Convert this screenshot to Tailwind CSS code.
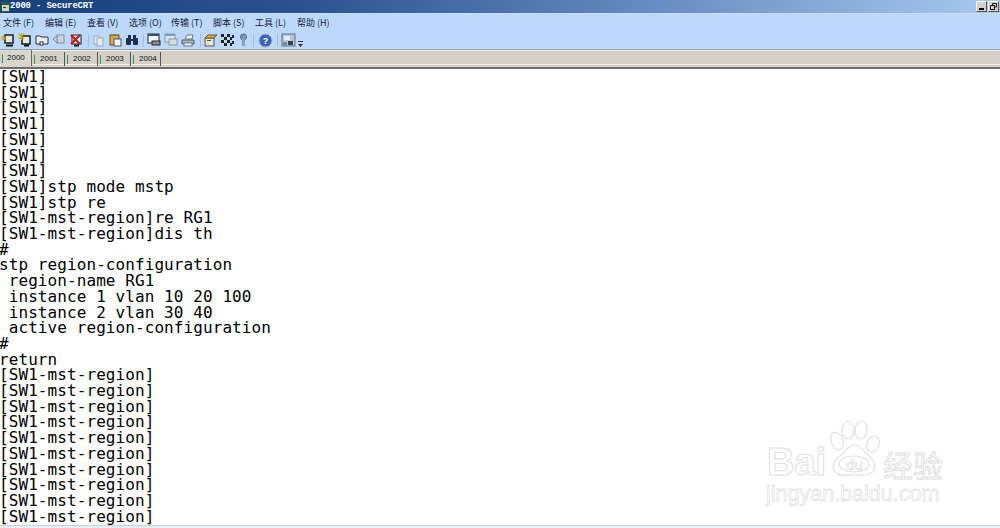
<!DOCTYPE html>
<html lang="zh">
<head>
    <meta charset="UTF-8">
    <title>2000 - SecureCRT</title>
    <script src="https://cdn.jsdelivr.net/npm/@tailwindcss/browser@4"></script>
</head>
<body class="w-[1000px] h-[528px] overflow-hidden bg-white relative flex flex-col">

    <!-- title bar -->
    <div class="h-[13px] shrink-0 flex items-center bg-gradient-to-r from-[#17407f] via-[#2a528f] via-30% to-[#a6caf0] pl-[1px] pr-[1px]">
        <svg width="9" height="10" viewBox="0 0 9 10"><rect x="0" y="0" width="9" height="10" fill="#2f5a3a"/><rect x="1" y="3" width="7" height="6" fill="#c9d6c8"/><rect x="2" y="5" width="3" height="1" fill="#333"/></svg>
        <span class="text-[9px] leading-[13px] font-bold text-white font-['Liberation_Mono',monospace] tracking-[-0.2px] whitespace-pre">2000 - SecureCRT</span>
        <div class="ml-auto flex gap-[1px]">
            <div class="w-[11px] h-[11px] bg-[#d4d0c8] border border-[#f4f3ef] border-r-[#555] border-b-[#555] flex items-end justify-center pb-[1px]"><div class="w-[5px] h-[2px] bg-black"></div></div>
            <div class="w-[11px] h-[11px] bg-[#d4d0c8] border border-[#f4f3ef] border-r-[#555] border-b-[#555] flex items-center justify-center">
                <svg width="7" height="7" viewBox="0 0 7 7" fill="none" stroke="#111"><path d="M2.500 2V.5h4v3.500H5M.5 2.500h4v4h-4z"/></svg>
            </div>
        </div>
    </div>

    <!-- menu and toolbar -->
    <div class="h-[37px] shrink-0 bg-[#bcd9fc] border-t border-[#cfdcef] border-b border-b-[#9aa3ad]">
        <div class="h-[18px] flex pl-[3px] items-center text-[9px] text-[#10203a] font-['Noto_Sans_CJK_SC','Liberation_Serif',serif] whitespace-nowrap">
            <span class="w-[42px]">文件 (F)</span>
            <span class="w-[42px]">编辑 (E)</span>
            <span class="w-[42px]">查看 (V)</span>
            <span class="w-[42px]">选项 (O)</span>
            <span class="w-[42px]">传输 (T)</span>
            <span class="w-[42px]">脚本 (S)</span>
            <span class="w-[42px]">工具 (L)</span>
            <span class="w-[42px]">帮助 (H)</span>
        </div>
        <div class="h-[16px] flex items-center pl-[1px]">
            <!-- connect group -->
            <svg class="w-[14px] h-[14px]" viewBox="0 0 14 14"><rect x="4" y="2" width="8" height="8" fill="#dfe8df" stroke="#111" stroke-width="1.400"/><path d="M0 5h5M2.500 2.500v5M.5 3l4 4M4.500 3l-4 4" stroke="#d0a820"/><path d="M5 12.500h7" stroke="#111" stroke-width="2"/></svg>
            <svg class="ml-[3px] w-[14px] h-[14px]" viewBox="0 0 14 14"><rect x="4" y="3" width="8" height="8" fill="#e4ecd8" stroke="#111" stroke-width="1.400"/><path d="M1 1l5 5M6 1L1 6M3.500 0v7" stroke="#c9a020" stroke-width="1.200"/><path d="M6 12.500h5" stroke="#111" stroke-width="2"/></svg>
            <svg class="ml-[3px] w-[14px] h-[14px]" viewBox="0 0 14 14" fill="#e8eef4" stroke="#333"><path d="M1 3h4l1 1h7v7H1z"/><rect x="5" y="9" width="3" height="3" fill="#fff"/></svg>
            <svg class="ml-[3px] w-[14px] h-[14px]" viewBox="0 0 14 14" fill="#c8d6e4" stroke="#7f8b98"><rect x="5" y="2" width="7" height="8"/><path d="M1 6l4-3v7z"/></svg>
            <svg class="ml-[3px] w-[14px] h-[14px]" viewBox="0 0 14 14"><rect x="3" y="2" width="9" height="9" fill="#e8edf2" stroke="#222"/><path d="M2 2l9 9M11 2l-9 9" stroke="#c01818" stroke-width="2.200"/><path d="M5 12.500h5" stroke="#111" stroke-width="2"/></svg>
            <div class="ml-[5px] w-[1px] h-[13px] bg-[#a8bcd4]"></div>
            <!-- edit group -->
            <svg class="ml-[3px] w-[13px] h-[13px]" viewBox="0 0 13 13" fill="#e4ecf4" stroke="#9aa8b8"><rect x="2" y="2" width="6" height="8"/><rect x="5" y="4" width="6" height="8"/></svg>
            <svg class="ml-[3px] w-[14px] h-[14px]" viewBox="0 0 14 14"><rect x="2" y="2" width="9" height="10" fill="#d8a848" stroke="#6a5020"/><rect x="5" y="1" width="3" height="2" fill="#777"/><rect x="6" y="6" width="7" height="7" fill="#f4f4f4" stroke="#555"/></svg>
            <svg class="ml-[3px] w-[14px] h-[14px]" viewBox="0 0 14 14" fill="#1e2f50"><rect x="1" y="5" width="5" height="7" rx="1"/><rect x="8" y="5" width="5" height="7" rx="1"/><rect x="3" y="2" width="3" height="4"/><rect x="8" y="2" width="3" height="4"/><rect x="6" y="6" width="2" height="2"/></svg>
            <div class="ml-[4px] w-[1px] h-[13px] bg-[#a8bcd4]"></div>
            <!-- session group -->
            <svg class="ml-[3px] w-[15px] h-[14px]" viewBox="0 0 15 14"><rect x="1" y="1" width="11" height="9" fill="#f2f4f6" stroke="#222"/><rect x="1" y="1" width="11" height="2" fill="#3a4f78"/><rect x="5" y="8" width="8" height="4" fill="#8c8c8c" stroke="#222"/></svg>
            <svg class="ml-[2px] w-[15px] h-[14px]" viewBox="0 0 15 14"><rect x="1" y="1" width="10" height="8" fill="#dce6ee" stroke="#8498a8"/><rect x="1" y="1" width="10" height="2" fill="#7f9ab8"/><rect x="5" y="6" width="8" height="6" fill="#cfe0d4" stroke="#8498a8"/></svg>
            <svg class="ml-[2px] w-[15px] h-[14px]" viewBox="0 0 15 14"><path d="M4 6l2-4h6l-1 4z" fill="#eef2f6" stroke="#6a7684"/><path d="M1 7h12v4H1z" fill="#aab4c0" stroke="#555f6a"/><rect x="3" y="10" width="8" height="3" fill="#eef2f6" stroke="#6a7684"/></svg>
            <div class="ml-[4px] w-[1px] h-[13px] bg-[#a8bcd4]"></div>
            <!-- options group -->
            <svg class="ml-[2px] w-[15px] h-[14px]" viewBox="0 0 15 14"><rect x="2" y="5" width="9" height="8" fill="#e8e4d4" stroke="#555"/><path d="M2 5l3-3h9l-3 3z" fill="#e0b040" stroke="#6a5020"/><rect x="4" y="7" width="4" height="1" fill="#555"/></svg>
            <svg class="ml-[2px] w-[15px] h-[15px]" viewBox="0 0 15 15" fill="#232323"><path d="M1 1h3v3H1zM7 1h3v3H7zM12 2h2v3h-2zM4 4h3v3H4zM10 4h2v3h-2zM1 7h3v3H1zM7 7h3v3H7zM12 8h2v3h-2zM4 10h3v3H4zM10 10h2v3h-2z"/></svg>
            <svg class="ml-[3px] w-[11px] h-[14px]" viewBox="0 0 11 14"><circle cx="5.500" cy="4" r="3" fill="#7f98b0" stroke="#50677f"/><rect x="4" y="6" width="3" height="7" fill="#8aa0b6"/></svg>
            <div class="ml-[4px] w-[1px] h-[13px] bg-[#a8bcd4]"></div>
            <!-- help -->
            <svg class="ml-[4px] w-[15px] h-[15px]" viewBox="0 0 15 15"><circle cx="7.500" cy="7.500" r="6.500" fill="#3a64b8" stroke="#9fb4d4"/><text x="7.500" y="11" text-anchor="middle" font-size="9" font-weight="700" fill="#fff" font-family="Liberation Sans">?</text></svg>
            <div class="ml-[4px] w-[1px] h-[13px] bg-[#a8bcd4]"></div>
            <svg class="ml-[3px] w-[15px] h-[14px]" viewBox="0 0 15 14"><rect x="1" y="1" width="13" height="12" fill="#b8c6d4" stroke="#5f6d7c"/><rect x="3" y="3" width="6" height="4" fill="#e6edf4"/><rect x="7" y="8" width="5" height="4" fill="#33414f"/><rect x="2" y="9" width="4" height="3" fill="#77899b"/></svg>
            <svg class="ml-[2px] mt-[8px] w-[5px] h-[6px]" viewBox="0 0 5 6" fill="#333"><rect x="0" y="0" width="5" height="1"/><path d="M0 3h5L2.500 6z"/></svg>
        </div>
    </div>

    <!-- tab bar -->
    <div class="h-[17px] shrink-0 bg-[#d4d0c8] border-t border-[#f0eee8]">
        <div class="h-[13px] flex items-start pl-[1px] text-[8px] text-[#111] font-['Liberation_Sans',sans-serif]">
            <div class="h-[16px] w-[31px] -mt-[1px] flex items-center bg-[#d9d6ce] border-r border-[#666] pl-[1px] gap-[4px] relative z-10"><span class="w-[1px] h-[9px] bg-[#25a244]"></span>2000</div>
            <div class="h-[14px] w-[33px] mt-[1px] flex items-center border-r border-[#555] pl-[2px] gap-[5px]"><span class="w-[1px] h-[9px] bg-[#25a244]"></span>2001</div>
            <div class="h-[14px] w-[33px] mt-[1px] flex items-center border-r border-[#555] pl-[2px] gap-[5px]"><span class="w-[1px] h-[9px] bg-[#25a244]"></span>2002</div>
            <div class="h-[14px] w-[33px] mt-[1px] flex items-center border-r border-[#555] pl-[2px] gap-[5px]"><span class="w-[1px] h-[9px] bg-[#25a244]"></span>2003</div>
            <div class="h-[14px] w-[30px] mt-[1px] flex items-center border-r border-[#555] pl-[2px] gap-[5px]"><span class="w-[1px] h-[9px] bg-[#25a244]"></span>2004</div>
        </div>
        <div class="h-[1px] bg-[#ecebe6]"></div>
    </div>
    <div class="h-[2px] shrink-0 bg-[#6e6e6e]"></div>

    <!-- terminal -->
    <pre class="flex-1 min-h-0 bg-white text-black text-[16px] leading-[15.71px] tracking-[0.08px] font-['DejaVu_Sans_Mono',monospace] -ml-[1px]">[SW1]
[SW1]
[SW1]
[SW1]
[SW1]
[SW1]
[SW1]
[SW1]stp mode mstp
[SW1]stp re
[SW1-mst-region]re RG1
[SW1-mst-region]dis th
#
stp region-configuration
 region-name RG1
 instance 1 vlan 10 20 100
 instance 2 vlan 30 40
 active region-configuration
#
return
[SW1-mst-region]
[SW1-mst-region]
[SW1-mst-region]
[SW1-mst-region]
[SW1-mst-region]
[SW1-mst-region]
[SW1-mst-region]
[SW1-mst-region]
[SW1-mst-region]
[SW1-mst-region]</pre>
    <div class="h-[3px] shrink-0 bg-[#e8f0f9] border-t border-[#c9d2dc]"></div>

    <!-- watermark -->
    <div class="absolute left-[766px] top-[420px] w-[190px] h-[86px] text-transparent [-webkit-text-stroke:1px_#e0e0e0]">
        <svg class="absolute left-[61px] top-0 w-[56px] h-[60px]" viewBox="0 0 56 60" fill="#fff" stroke="#e0e0e0" stroke-width="1.200">
            <ellipse cx="10" cy="21" rx="6" ry="9" transform="rotate(-20 10 21)"/>
            <ellipse cx="21" cy="10" rx="6" ry="9"/>
            <ellipse cx="34" cy="10" rx="6" ry="9" transform="rotate(6 34 10)"/>
            <ellipse cx="46" cy="24" rx="6" ry="8.500" transform="rotate(20 46 24)"/>
            <path d="M28 25c6 0 8 6 13 10 6 5 8 10 6 15-3 6-11 5-19 5-8 0-15 2-20-3-4-6-1-12 5-16 6-4 8-11 15-11z"/>
            <ellipse cx="27" cy="44" rx="15" ry="8"/>
        </svg>
        <span class="absolute left-[80px] top-[36px] text-[15px] leading-[18px] font-['Liberation_Sans',sans-serif] [-webkit-text-stroke:0.6px_#dcdcdc]">du</span>
        <span class="absolute left-[1px] top-[22px] text-[38px] leading-[40px] font-bold font-['Liberation_Sans',sans-serif] whitespace-nowrap">Bai</span>
        <span class="absolute left-[117px] top-[26px] text-[30px] leading-[36px] font-['Noto_Sans_CJK_SC',sans-serif] whitespace-nowrap">经验</span>
        <span class="absolute left-0 top-[62px] text-[21.5px] leading-[24px] [-webkit-text-stroke:0.8px_#e2e2e2] whitespace-nowrap font-['Liberation_Sans',sans-serif]">jingyan.baidu.com</span>
    </div>
</body>
</html>
